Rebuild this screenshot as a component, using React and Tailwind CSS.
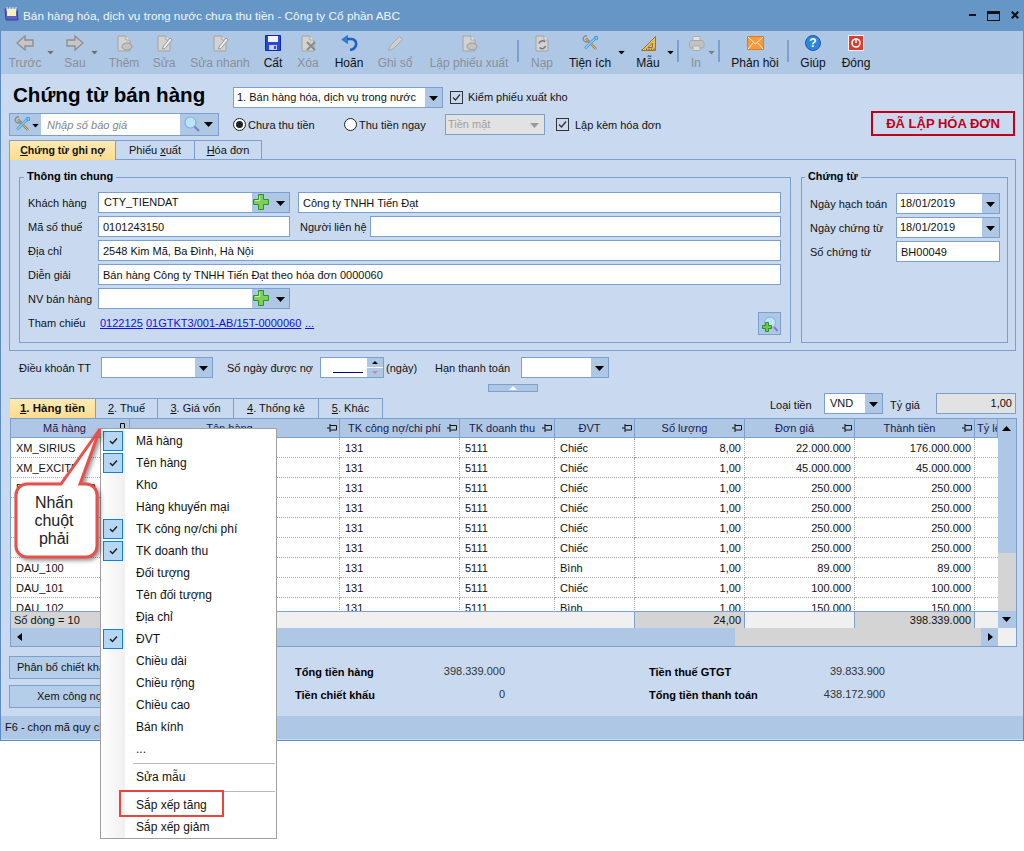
import React from "react";

const T = ({ c = "", children }) => (
  <div className={"absolute h-4 leading-4 whitespace-nowrap " + c}>{children}</div>
);

const Caret = ({ c = "", fill = "#000000" }) => (
  <svg className={"absolute " + c} width="9" height="5" viewBox="0 0 9 5">
    <path d="M0 0H9L4.5 5Z" fill={fill} />
  </svg>
);

const Plus = ({ c = "" }) => (
  <svg className={"absolute " + c} width="16" height="16" viewBox="0 0 16 16">
    <path d="M5.5 .5H10.5V5.5H15.5V10.5H10.5V15.5H5.5V10.5H.5V5.5H5.5Z" fill="#7fce5a" stroke="#2f8f2a" />
    <path d="M6.5 2V6.5H2" fill="none" stroke="#c4f0a6" />
  </svg>
);

const Box = ({ c = "", children }) => (
  <div className={"absolute bg-white border border-[#7ba0cf] " + c}>{children}</div>
);

const Btn = ({ c = "" }) => (
  <div className={"absolute bg-[#adc7e5] " + c}>
    <Caret c="left-[4px] top-[8px]" />
  </div>
);

const Check = ({ c = "" }) => (
  <div className={"absolute w-[13px] h-[13px] border border-[#333333] bg-[#c9daf0] " + c}>
    <svg className="absolute left-0 top-0" width="11" height="11" viewBox="0 0 11 11">
      <path d="M2 5.5L4.5 8L9 2.5" fill="none" stroke="#333333" strokeWidth="1.3" />
    </svg>
  </div>
);

const Radio = ({ c = "", on }) => (
  <div className={"absolute w-[13px] h-[13px] rounded-full border border-[#222222] bg-white flex items-center justify-center " + c}>
    {on && <div className="w-[7px] h-[7px] rounded-full bg-[#222222]" />}
  </div>
);

const Arrow = ({ flip }) => (
  <svg width="18" height="16" viewBox="0 0 18 16">
    <path d={flip ? "M9 1L17 8L9 15V11H1V5H9Z" : "M9 1L1 8L9 15V11H17V5H9Z"} fill="#c6c6c6" stroke="#8f8f8f" strokeWidth="1.4" />
  </svg>
);

const Doc = ({ children }) => (
  <svg width="17" height="17" viewBox="0 0 17 17">
    <path d="M2 1H10L14 5V16H2Z" fill="#d2d2d2" stroke="#a3a3a3" />
    <path d="M10 1V5H14" fill="#efefef" stroke="#a3a3a3" />
    {children}
  </svg>
);

const ToolsIcon = () => (
  <svg width="17" height="17" viewBox="0 0 17 17">
    <path d="M4 3.500L14 14" stroke="#9a7a40" strokeWidth="2.400" />
    <path d="M4 3.500L14 14" stroke="#f0c070" strokeWidth="1" />
    <path d="M13 3.500L3 13.500" stroke="#4a9fe0" strokeWidth="2.600" />
    <path d="M13 3.500L3 13.500" stroke="#bfe4fa" strokeWidth="1" />
    <path d="M5 1A3 3 0 1 0 7 5" fill="none" stroke="#8c8c8c" strokeWidth="1.400" />
    <path d="M12.500 1.500L15.500 1.500L15.500 4.500L13.500 5Z" fill="#7ac4f0" stroke="#3a88c8" strokeWidth=".7" />
  </svg>
);

const icons = {
  back: <Arrow />,
  fwd: <Arrow flip />,
  add: <Doc><ellipse cx="11" cy="11.5" rx="5" ry="3.5" fill="#c3c3c3" stroke="#9a9a9a" /></Doc>,
  edit: <Doc><path d="M7 12L14 3L16 5L9 13.5L6.5 14Z" fill="#f0f0f0" stroke="#9a9a9a" /></Doc>,
  save: (
    <svg width="16" height="16" viewBox="0 0 16 16">
      <path d="M.5 .5H15.5V15.5H.5Z" fill="#2a48d8" stroke="#1228a8" />
      <path d="M3 1H13V7H3Z" fill="#f4f4f4" />
      <path d="M4 10H12V15H4Z" fill="#c4d2f0" />
      <path d="M9 11H11V14H9Z" fill="#2a48d8" />
    </svg>
  ),
  del: <Doc><path d="M7 7L15 15M15 7L7 15" stroke="#8a8a8a" strokeWidth="2" /></Doc>,
  undo: (
    <svg width="17" height="16" viewBox="0 0 17 16">
      <path d="M5 4H10C14 4 15.500 7 15 10C14.500 12.500 12 14.500 9 15" fill="none" stroke="#1e5fc8" strokeWidth="2.600" />
      <path d="M6.500 .5L.8 4.500L6.500 8.500Z" fill="#2a80e0" stroke="#1a55b0" strokeWidth=".6" />
    </svg>
  ),
  pencil: (
    <svg width="17" height="17" viewBox="0 0 17 17">
      <path d="M1.500 15.500L3 11L12.500 1.500L15.500 4.500L6 14Z" fill="#cfcfcf" stroke="#a8a8a8" />
    </svg>
  ),
  reload: (
    <Doc>
      <path d="M5 8.500A3.500 3.500 0 0 1 11 7M11.500 11A3.500 3.500 0 0 1 5.500 12.500" fill="none" stroke="#777777" strokeWidth="1.500" />
    </Doc>
  ),
  tools: <ToolsIcon />,
  ruler: (
    <svg width="17" height="17" viewBox="0 0 17 17">
      <path d="M15.500 1.500V15.500H1.500Z" fill="#edbc54" stroke="#9c7230" />
      <path d="M12.500 8V12.500H8Z" fill="#adc7e5" stroke="#9c7230" />
      <path d="M14 15V13.500M11.500 15V13.500M9 15V13.500M6.500 15V13.500" stroke="#7a5a20" />
    </svg>
  ),
  printer: (
    <svg width="17" height="17" viewBox="0 0 17 17">
      <path d="M5 1.500H12V6H5Z" fill="#e4e4e4" stroke="#adadad" />
      <path d="M1.500 7.500C1.500 6 3 5.500 4 5.500H13C15 5.500 16 7 16 8.500V11C16 12.500 15 13 14 13H3.500C2 13 1 12 1.500 10Z" fill="#c2c2c2" stroke="#a8a8a8" />
      <path d="M5 11H12V15.500H5Z" fill="#dcdcdc" stroke="#adadad" />
    </svg>
  ),
  mail: (
    <svg width="17" height="14" viewBox="0 0 17 14">
      <path d="M.5 .5H16.500V13.500H.5Z" fill="#f79a3c" stroke="#e07a20" />
      <path d="M1 1L8.500 8L16 1M1 13L6.500 6.500M16 13L10.500 6.500" fill="none" stroke="#fff4e0" />
    </svg>
  ),
  help: (
    <div className="w-[16px] h-[16px] rounded-full bg-[#2f84dc] border border-[#1a5cae] flex items-center justify-center text-white font-bold text-[12px] leading-none">?</div>
  ),
  power: (
    <svg width="16" height="16" viewBox="0 0 16 16">
      <path d="M.5 .5H15.500V15.500H.5Z" fill="#dc3c2c" stroke="#f4f4f4" />
      <circle cx="8" cy="8" r="4" fill="none" stroke="#ffffff" strokeWidth="1.600" />
      <path d="M8 3.500V8" stroke="#ffffff" strokeWidth="1.600" />
    </svg>
  ),
};

const tools = [
  ["Trước", "left-[25px]", "back", 1],
  ["Sau", "left-[75px]", "fwd", 1],
  ["Thêm", "left-[124px]", "add", 1],
  ["Sửa", "left-[164px]", "edit", 1],
  ["Sửa nhanh", "left-[220px]", "edit", 1],
  ["Cất", "left-[273px]", "save", 0],
  ["Xóa", "left-[308px]", "del", 1],
  ["Hoãn", "left-[349px]", "undo", 0],
  ["Ghi sổ", "left-[395px]", "pencil", 1],
  ["Lập phiếu xuất", "left-[469px]", "add", 1],
  ["Nạp", "left-[542px]", "reload", 1],
  ["Tiện ích", "left-[590px]", "tools", 0],
  ["Mẫu", "left-[648px]", "ruler", 0],
  ["In", "left-[696px]", "printer", 1],
  ["Phản hồi", "left-[755px]", "mail", 0],
  ["Giúp", "left-[813px]", "help", 0],
  ["Đóng", "left-[856px]", "power", 0],
];

const Pin = ({ down }) =>
  down ? (
    <svg className="absolute right-[3px] top-[5px]" width="7" height="9" viewBox="0 0 7 9">
      <path d="M1.500 .5H5.500V6.500H1.500ZM0 6.500H7M3.500 6.500V9" fill="none" stroke="#111111" />
    </svg>
  ) : (
    <svg className="absolute right-[2px] top-[6px]" width="10" height="8" viewBox="0 0 10 8">
      <path d="M0 4H3M3 0V8M3 1.500H9.500V6H3" fill="none" stroke="#111111" />
    </svg>
  );

const cols = "grid grid-cols-[120px_210px_120px_95px_80px_110px_110px_120px_23px]";

const heads = ["Mã hàng", "Tên hàng", "TK công nợ/chi phí", "TK doanh thu", "ĐVT", "Số lượng", "Đơn giá", "Thành tiền", "Tỷ lệ"];

const rows = [
  ["XM_SIRIUS", "Chiếc", "8,00", "22.000.000", "176.000.000"],
  ["XM_EXCITER", "Chiếc", "1,00", "45.000.000", "45.000.000"],
  ["FILTER_000002", "Chiếc", "1,00", "250.000", "250.000"],
  ["FILTER_000002", "Chiếc", "1,00", "250.000", "250.000"],
  ["FILTER_000002", "Chiếc", "1,00", "250.000", "250.000"],
  ["FILTER_000002", "Chiếc", "1,00", "250.000", "250.000"],
  ["DAU_100", "Bình", "1,00", "89.000", "89.000"],
  ["DAU_101", "Chiếc", "1,00", "100.000", "100.000"],
  ["DAU_102", "Bình", "1,00", "150.000", "150.000"],
];

const cell = "h-5 leading-[21px] border-r border-b border-dotted border-[#aaaaaa] whitespace-nowrap overflow-hidden ";

const menu = [
  ["Mã hàng", 1], ["Tên hàng", 1], ["Kho", 0], ["Hàng khuyến mại", 0],
  ["TK công nợ/chi phí", 1], ["TK doanh thu", 1], ["Đối tượng", 0], ["Tên đối tượng", 0],
  ["Địa chỉ", 0], ["ĐVT", 1], ["Chiều dài", 0], ["Chiều rộng", 0],
  ["Chiều cao", 0], ["Bán kính", 0], ["...", 0],
];

const MenuItem = ({ label, on }) => (
  <div className="relative h-[22px] leading-[22px] pl-[35px] whitespace-nowrap text-[12px]">
    {on ? (
      <div className="absolute left-[2px] top-[1px] w-5 h-5 bg-[#b5d7f3] border border-[#0f82d8] flex items-center justify-center">
        <svg width="9" height="8" viewBox="0 0 9 8">
          <path d="M1 4L3.500 6.500L8 1.500" fill="none" stroke="#222222" strokeWidth="1.500" />
        </svg>
      </div>
    ) : null}
    {label}
  </div>
);

const B = "font-bold text-[11px] ";

export default function App() {
  return (
    <div className="relative w-[1024px] h-[851px] overflow-hidden bg-white text-[11px] text-[#111111] font-[Liberation_Sans,Arial,sans-serif]">
      <div className="absolute left-0 top-0 w-[1024px] h-[741px] bg-[#c9daf0] border-x border-b border-[#5d8cc0]" />

      {/* title bar */}
      <div className="absolute left-0 top-0 w-[1024px] h-[31px] bg-[#6596c6]" />
      <svg className="absolute left-[4px] top-[6px]" width="15" height="16" viewBox="0 0 15 16">
        <path d="M1 3H13L14 14H2Z" fill="#5a63c8" stroke="#3b4098" />
        <path d="M3 2.500H12V10H3Z" fill="#f8f2b8" />
        <path d="M3 1V5M6 1V5M9 1V5M12 1V5" stroke="#e8e8f8" />
      </svg>
      <T c="left-[23px] top-[8px] text-[11.8px] text-[#f2f6fb]">Bán hàng hóa, dịch vụ trong nước chưa thu tiền - Công ty Cổ phần ABC</T>
      <div className="absolute left-[969px] top-[14px] w-[7px] h-[2px] bg-[#111111]" />
      <div className="absolute left-[987px] top-[11px] w-[13px] h-[10px] border border-t-[3px] border-[#111111]" />
      <svg className="absolute left-[1011px] top-[11px]" width="8" height="8" viewBox="0 0 8 8">
        <path d="M.8 .8L7.200 7.200M7.200 .8L.8 7.200" stroke="#111111" strokeWidth="2" />
      </svg>

      {/* toolbar */}
      <div className="absolute left-px top-[31px] w-[1022px] h-[43px] bg-[#adc7e5]" />
      {tools.map(([label, pos, icon, off]) => (
        <div key={label} className={"absolute top-[34px] w-[100px] -ml-[50px] flex flex-col items-center " + pos}>
          <div className="h-[18px] flex items-center justify-center">{icons[icon]}</div>
          <div className={"mt-[3px] h-4 leading-4 text-[12px] whitespace-nowrap " + (off ? "text-[#8b8f96]" : "text-[#111111]")}>{label}</div>
        </div>
      ))}
      <Caret c="left-[46px] top-[50px] scale-75" fill="#6f6f6f" />
      <Caret c="left-[90px] top-[50px] scale-75" fill="#6f6f6f" />
      <Caret c="left-[617px] top-[50px] scale-75" />
      <Caret c="left-[666px] top-[50px] scale-75" />
      <Caret c="left-[707px] top-[50px] scale-75" fill="#7d7d7d" />
      <div className="absolute left-[517px] top-[40px] w-[2px] h-[22px] bg-[#7ba0cf]" />
      <div className="absolute left-[677px] top-[40px] w-[2px] h-[22px] bg-[#7ba0cf]" />
      <div className="absolute left-[718px] top-[40px] w-[2px] h-[22px] bg-[#7ba0cf]" />
      <div className="absolute left-[787px] top-[40px] w-[2px] h-[22px] bg-[#7ba0cf]" />

      {/* heading row */}
      <div className="absolute left-[13px] top-[81px] h-7 leading-7 text-[20.6px] font-bold text-black whitespace-nowrap">Chứng từ bán hàng</div>
      <Box c="left-[233px] top-[87px] w-[210px] h-[21px]">
        <Btn c="right-0 top-0 w-[17px] h-[19px]" />
      </Box>
      <T c="left-[237px] top-[89px]">1. Bán hàng hóa, dịch vụ trong nước</T>
      <Check c="left-[450px] top-[91px]" />
      <T c="left-[468px] top-[89px]">Kiểm phiếu xuất kho</T>

      {/* search row */}
      <div className="absolute left-[9px] top-[113px] w-[210px] h-[23px] bg-[#adc7e5] border border-[#7ba0cf]">
        <div className="absolute left-[31px] top-0 w-[139px] h-[21px] bg-white" />
        <Caret c="left-[21px] top-[9px] scale-75" />
        <Caret c="left-[194px] top-[8px]" />
      </div>
      <div className="absolute left-[14px] top-[116px]"><ToolsIcon /></div>
      <T c="left-[47px] top-[117px] italic text-[#80868e]">Nhập số báo giá</T>
      <svg className="absolute left-[184px] top-[116px]" width="16" height="16" viewBox="0 0 16 16">
        <circle cx="6.500" cy="6.500" r="5.500" fill="#bde3f8" stroke="#7fb2dc" strokeWidth="1.200" />
        <path d="M10.500 10.500L15 15" stroke="#8a78c8" strokeWidth="2.200" />
      </svg>
      <Radio c="left-[233px] top-[118px]" on />
      <T c="left-[248px] top-[117px]">Chưa thu tiền</T>
      <Radio c="left-[344px] top-[118px]" />
      <T c="left-[359px] top-[117px]">Thu tiền ngay</T>
      <div className="absolute left-[445px] top-[114px] w-[100px] h-[21px] bg-[#e2e2e2] border border-[#7ba0cf]">
        <Caret c="left-[84px] top-[8px]" fill="#9a9a9a" />
      </div>
      <T c="left-[448px] top-[116px] text-[#a0a0a0]">Tiền mặt</T>
      <Check c="left-[556px] top-[118px]" />
      <T c="left-[575px] top-[117px]">Lập kèm hóa đơn</T>
      <div className="absolute left-[871px] top-[111px] w-[144px] h-[25px] border-2 border-[#c00018] flex items-center justify-center text-[13px] font-bold text-[#c00018] whitespace-nowrap">ĐÃ LẬP HÓA ĐƠN</div>

      {/* top tabs */}
      <div className="absolute left-[9px] top-[159px] w-[1007px] h-[192px] border border-[#7ba0cf]" />
      <div className="absolute left-[9px] top-[140px] flex h-5">
        <div className="w-[107px] flex items-center justify-center font-bold text-[10.6px] bg-linear-to-b from-[#ffeab2] to-[#fddc90] border border-b-0 border-[#7ba0cf] whitespace-nowrap"><span><u>C</u>hứng từ ghi nợ</span></div>
        <div className="w-[79px] flex items-center justify-center border-t border-r border-[#7ba0cf] whitespace-nowrap"><span>Phiếu <u>x</u>uất</span></div>
        <div className="w-[67px] flex items-center justify-center border-t border-r border-[#7ba0cf] whitespace-nowrap"><span><u>H</u>óa đơn</span></div>
      </div>

      {/* group: Thông tin chung */}
      <div className="absolute left-[19px] top-[177px] w-[772px] h-[166px] border border-[#7ba0cf]" />
      <div className={"absolute left-[24px] top-[168px] h-4 leading-4 px-[3px] bg-[#c9daf0] text-black whitespace-nowrap " + B}>Thông tin chung</div>
      <T c="left-[28px] top-[195px]">Khách hàng</T>
      <Box c="left-[98px] top-[192px] w-[192px] h-[21px]">
        <div className="absolute left-[153px] top-0 w-[37px] h-[19px] bg-[#adc7e5]" />
        <Caret c="left-[177px] top-[8px]" />
      </Box>
      <Plus c="left-[253px] top-[194px]" />
      <T c="left-[104px] top-[194px]">CTY_TIENDAT</T>
      <Box c="left-[298px] top-[192px] w-[483px] h-[21px]" />
      <T c="left-[303px] top-[195px]">Công ty TNHH Tiến Đạt</T>
      <T c="left-[28px] top-[219px]">Mã số thuế</T>
      <Box c="left-[98px] top-[216px] w-[192px] h-[21px]" />
      <T c="left-[103px] top-[219px]">0101243150</T>
      <T c="left-[300px] top-[219px]">Người liên hệ</T>
      <Box c="left-[370px] top-[216px] w-[411px] h-[21px]" />
      <T c="left-[28px] top-[243px]">Địa chỉ</T>
      <Box c="left-[98px] top-[240px] w-[683px] h-[21px]" />
      <T c="left-[103px] top-[243px]">2548 Kim Mã, Ba Đình, Hà Nội</T>
      <T c="left-[28px] top-[267px]">Diễn giải</T>
      <Box c="left-[98px] top-[264px] w-[683px] h-[21px]" />
      <T c="left-[103px] top-[267px]">Bán hàng Công ty TNHH Tiến Đạt theo hóa đơn 0000060</T>
      <T c="left-[28px] top-[291px]">NV bán hàng</T>
      <Box c="left-[98px] top-[288px] w-[192px] h-[21px]">
        <div className="absolute left-[153px] top-0 w-[37px] h-[19px] bg-[#adc7e5]" />
        <Caret c="left-[177px] top-[8px]" />
      </Box>
      <Plus c="left-[253px] top-[290px]" />
      <T c="left-[28px] top-[315px]">Tham chiếu</T>
      <T c="left-[100px] top-[315px] text-[#1010e0] underline">0122125</T>
      <T c="left-[146px] top-[315px] text-[#1010e0] underline">01GTKT3/001-AB/15T-0000060</T>
      <T c="left-[305px] top-[315px] text-[#1010e0] underline">...</T>
      <div className="absolute left-[758px] top-[312px] w-[23px] h-[23px] bg-[#adc7e5] border border-[#7ba0cf]">
        <svg className="absolute left-[3px] top-[3px]" width="16" height="16" viewBox="0 0 16 16">
          <circle cx="8" cy="6.500" r="5.500" fill="#bde3f8" stroke="#7fb2dc" />
          <path d="M12 11L15.500 15" stroke="#8a78c8" strokeWidth="2" />
          <path d="M3.500 6.500H6.500V9.500H9.500V12.500H6.500V15.500H3.500V12.500H.5V9.500H3.500Z" fill="#6cc850" stroke="#2f8f2a" />
        </svg>
      </div>

      {/* group: Chứng từ */}
      <div className="absolute left-[801px] top-[177px] w-[207px] h-[166px] border border-[#7ba0cf]" />
      <div className="absolute left-[805px] top-[168px] h-4 leading-4 px-[3px] bg-[#c9daf0] text-black whitespace-nowrap font-bold text-[10.8px]">Chứng từ</div>
      <T c="left-[810px] top-[196px]">Ngày hạch toán</T>
      <Box c="left-[896px] top-[193px] w-[104px] h-[21px]"><Btn c="right-0 top-0 w-[17px] h-[19px]" /></Box>
      <T c="left-[900px] top-[195px]">18/01/2019</T>
      <T c="left-[810px] top-[220px]">Ngày chứng từ</T>
      <Box c="left-[896px] top-[217px] w-[104px] h-[21px]"><Btn c="right-0 top-0 w-[17px] h-[19px]" /></Box>
      <T c="left-[900px] top-[219px]">18/01/2019</T>
      <T c="left-[810px] top-[244px]">Số chứng từ</T>
      <Box c="left-[896px] top-[241px] w-[104px] h-[21px]" />
      <T c="left-[901px] top-[244px]">BH00049</T>

      {/* payment row */}
      <T c="left-[19px] top-[360px]">Điều khoản TT</T>
      <Box c="left-[101px] top-[357px] w-[112px] h-[21px]"><Btn c="right-0 top-0 w-[17px] h-[19px]" /></Box>
      <T c="left-[227px] top-[360px]">Số ngày được nợ</T>
      <Box c="left-[320px] top-[357px] w-[64px] h-[21px]">
        <div className="absolute left-[12px] top-[14px] w-[30px] h-px bg-[#000080]" />
        <div className="absolute left-[46px] top-0 w-[16px] h-[9px] bg-[#adc7e5]">
          <svg className="absolute left-[5px] top-[3px]" width="6" height="3" viewBox="0 0 6 3"><path d="M0 3H6L3 0Z" fill="#000000" /></svg>
        </div>
        <div className="absolute left-[46px] top-[10px] w-[16px] h-[9px] bg-[#adc7e5]">
          <svg className="absolute left-[5px] top-[3px]" width="6" height="3" viewBox="0 0 6 3"><path d="M0 0H6L3 3Z" fill="#c88a8a" /></svg>
        </div>
      </Box>
      <T c="left-[386px] top-[360px]">(ngày)</T>
      <T c="left-[435px] top-[360px]">Hạn thanh toán</T>
      <Box c="left-[521px] top-[357px] w-[88px] h-[21px]"><Btn c="right-0 top-0 w-[17px] h-[19px]" /></Box>
      <div className="absolute left-[488px] top-[384px] w-[50px] h-[8px] bg-[#adc7e5] border border-[#7ba0cf]">
        <svg className="absolute left-[20px] top-[1px]" width="8" height="4" viewBox="0 0 8 4"><path d="M0 4H8L4 0Z" fill="#ffffff" /></svg>
      </div>

      {/* lower tabs */}
      <div className="absolute left-[10px] top-[398px] flex h-5">
        <div className="w-[85px] flex items-center justify-center font-bold text-[11.5px] bg-linear-to-b from-[#ffeab2] to-[#fddc90] border-t border-[#7ba0cf] whitespace-nowrap"><span><u>1</u>. Hàng tiền</span></div>
        <div className="w-[63px] flex items-center justify-center border-x border-t border-[#7ba0cf] whitespace-nowrap"><span><u>2</u>. Thuế</span></div>
        <div className="w-[76px] flex items-center justify-center border-r border-t border-[#7ba0cf] whitespace-nowrap"><span><u>3</u>. Giá vốn</span></div>
        <div className="w-[85px] flex items-center justify-center border-r border-t border-[#7ba0cf] whitespace-nowrap"><span><u>4</u>. Thống kê</span></div>
        <div className="w-[64px] flex items-center justify-center border-r border-t border-[#7ba0cf] whitespace-nowrap"><span><u>5</u>. Khác</span></div>
      </div>
      <T c="left-[770px] top-[397px]">Loại tiền</T>
      <Box c="left-[824px] top-[393px] w-[59px] h-[21px]"><Btn c="right-0 top-0 w-[17px] h-[19px]" /></Box>
      <T c="left-[830px] top-[395px]">VND</T>
      <T c="left-[890px] top-[397px]">Tỷ giá</T>
      <div className="absolute left-[936px] top-[393px] w-[80px] h-[21px] bg-[#e2e2e2] border border-[#7ba0cf] leading-[19px] text-right pr-[3px]">1,00</div>

      {/* data grid */}
      <div className="absolute left-[10px] top-[418px] w-[1007px] h-[229px] bg-white border border-[#7ba0cf] overflow-hidden">
        <div className={cols + " w-[988px] h-[20px] bg-[#adc7e5] text-[#1a1a50] -ml-px -mt-px"}>
          {heads.map((h, i) => (
            <div key={h} className={"relative h-[20px] leading-[21px] border-r border-b border-[#7ba0cf] whitespace-nowrap overflow-hidden " + (i === 8 ? "pl-[2px]" : "text-center pr-[10px]")}>
              {h}
              {i < 8 && <Pin down={i === 0} />}
            </div>
          ))}
        </div>
        <div className="w-[988px] h-[173px] overflow-hidden -ml-px">
          {rows.map((r, idx) => (
            <div key={idx} className={cols}>
              <div className={cell + "pl-[6px]"}>{r[0]}</div>
              <div className={cell} />
              <div className={cell + "pl-[5px]"}>131</div>
              <div className={cell + "pl-[5px]"}>5111</div>
              <div className={cell + "pl-[5px]"}>{r[1]}</div>
              <div className={cell + "text-right pr-[3px]"}>{r[2]}</div>
              <div className={cell + "text-right pr-[3px]"}>{r[3]}</div>
              <div className={cell + "text-right pr-[3px]"}>{r[4]}</div>
              <div className="h-5 border-b border-dotted border-[#aaaaaa]" />
            </div>
          ))}
        </div>
        <div className={cols + " w-[988px] h-[18px] bg-[#f0f0f0] border-y border-[#7ba0cf] -ml-px leading-[17px]"}>
          <div className="bg-[#d4d4d4] pl-[4px] border-r border-[#7ba0cf]">Số dòng = 10</div>
          <div className="col-span-4 border-r border-[#7ba0cf]" />
          <div className="bg-[#d4d4d4] text-right pr-[3px] border-r border-[#7ba0cf]">24,00</div>
          <div className="border-r border-[#7ba0cf]" />
          <div className="bg-[#d4d4d4] text-right pr-[3px] border-r border-[#7ba0cf]">398.339.000</div>
          <div />
        </div>
        <div className="flex h-[18px] -mt-px">
          <div className="relative w-[724px] bg-[#adc7e5]">
            <svg className="absolute left-[6px] top-[5px]" width="5" height="8" viewBox="0 0 5 8"><path d="M5 0V8L0 4Z" fill="#000000" /></svg>
          </div>
          <div className="w-[246px] bg-[#d4d4d4]" />
          <div className="relative w-[17px] bg-[#adc7e5]">
            <svg className="absolute left-[7px] top-[5px]" width="5" height="8" viewBox="0 0 5 8"><path d="M0 0V8L5 4Z" fill="#000000" /></svg>
          </div>
          <div className="w-[18px] bg-[#f0f0f0]" />
        </div>
        <div className="absolute left-[987px] top-0 w-[18px] h-[209px] flex flex-col bg-[#d4d4d4]">
          <div className="relative h-[134px] bg-[#adc7e5]">
            <svg className="absolute left-[4px] top-[7px]" width="9" height="5" viewBox="0 0 9 5"><path d="M0 5H9L4.500 0Z" fill="#000000" /></svg>
          </div>
          <div className="h-[58px]" />
          <div className="relative h-[17px] bg-[#adc7e5]">
            <svg className="absolute left-[4px] top-[6px]" width="9" height="5" viewBox="0 0 9 5"><path d="M0 0H9L4.500 5Z" fill="#000000" /></svg>
          </div>
        </div>
      </div>

      {/* bottom buttons */}
      <div className="absolute left-[9px] top-[656px] w-[130px] h-[23px] bg-[#b4cde9] border border-[#7ba0cf] leading-[21px] pl-[7px] whitespace-nowrap">Phân bổ chiết khấu</div>
      <div className="absolute left-[9px] top-[685px] w-[130px] h-[23px] bg-[#b4cde9] border border-[#7ba0cf] leading-[21px] pl-[27px] whitespace-nowrap">Xem công nợ</div>

      {/* totals */}
      <T c={"left-[295px] top-[664px] text-black " + B}>Tổng tiền hàng</T>
      <T c="right-[519px] top-[663px] text-[#333333]">398.339.000</T>
      <T c={"left-[295px] top-[687px] text-black " + B}>Tiền chiết khấu</T>
      <T c="right-[519px] top-[686px] text-[#333333]">0</T>
      <T c={"left-[649px] top-[664px] text-black " + B}>Tiền thuế GTGT</T>
      <T c="right-[139px] top-[663px] text-[#333333]">39.833.900</T>
      <T c={"left-[649px] top-[687px] text-black " + B}>Tổng tiền thanh toán</T>
      <T c="right-[139px] top-[686px] text-[#333333]">438.172.900</T>

      {/* status bar */}
      <div className="absolute left-px top-[716px] w-[1022px] h-[23px] bg-[#adc7e5]" />
      <T c="left-[5px] top-[719px]">F6 - chọn mã quy chuẩn</T>

      {/* context menu */}
      <div className="absolute left-[100px] top-[428px] w-[177px] h-[411px] bg-white border border-[#a0a0a0]">
        <div className="absolute left-0 top-0 w-[24px] h-[409px] bg-linear-to-r from-[#ffffff] to-[#f0f0f0]" />
        <div className="relative flex flex-col pt-px">
          {menu.map(([label, on]) => (
            <MenuItem key={label} label={label} on={on} />
          ))}
          <div className="h-[6px] flex items-center pl-[32px] pr-[1px]"><div className="w-full h-px bg-[#b8b8b8]" /></div>
          <MenuItem label="Sửa mẫu" />
          <div className="h-[6px] flex items-center pl-[32px] pr-[1px]"><div className="w-full h-px bg-[#b8b8b8]" /></div>
          <MenuItem label="Sắp xếp tăng" />
          <MenuItem label="Sắp xếp giảm" />
        </div>
      </div>
      <div className="absolute left-[119px] top-[790px] w-[105px] h-[27px] border-2 border-[#e8453f]" />

      {/* callout */}
      <svg className="absolute left-[10px] top-[425px] drop-shadow-[2px_2px_2px_rgba(0,0,0,0.45)]" width="95" height="140" viewBox="10 425 95 140">
        <path d="M100 429L80 484H86A11 11 0 0 1 97 495V546A11 11 0 0 1 86 557H27A11 11 0 0 1 16 546V495A11 11 0 0 1 27 484H61Z" fill="#ffffff" stroke="#e8504c" strokeWidth="3" />
      </svg>
      <div className="absolute left-[16px] top-[494px] w-[76px] text-center text-[16px] leading-[18px] text-[#222222]">Nhấn<br />chuột<br />phải</div>
    </div>
  );
}
